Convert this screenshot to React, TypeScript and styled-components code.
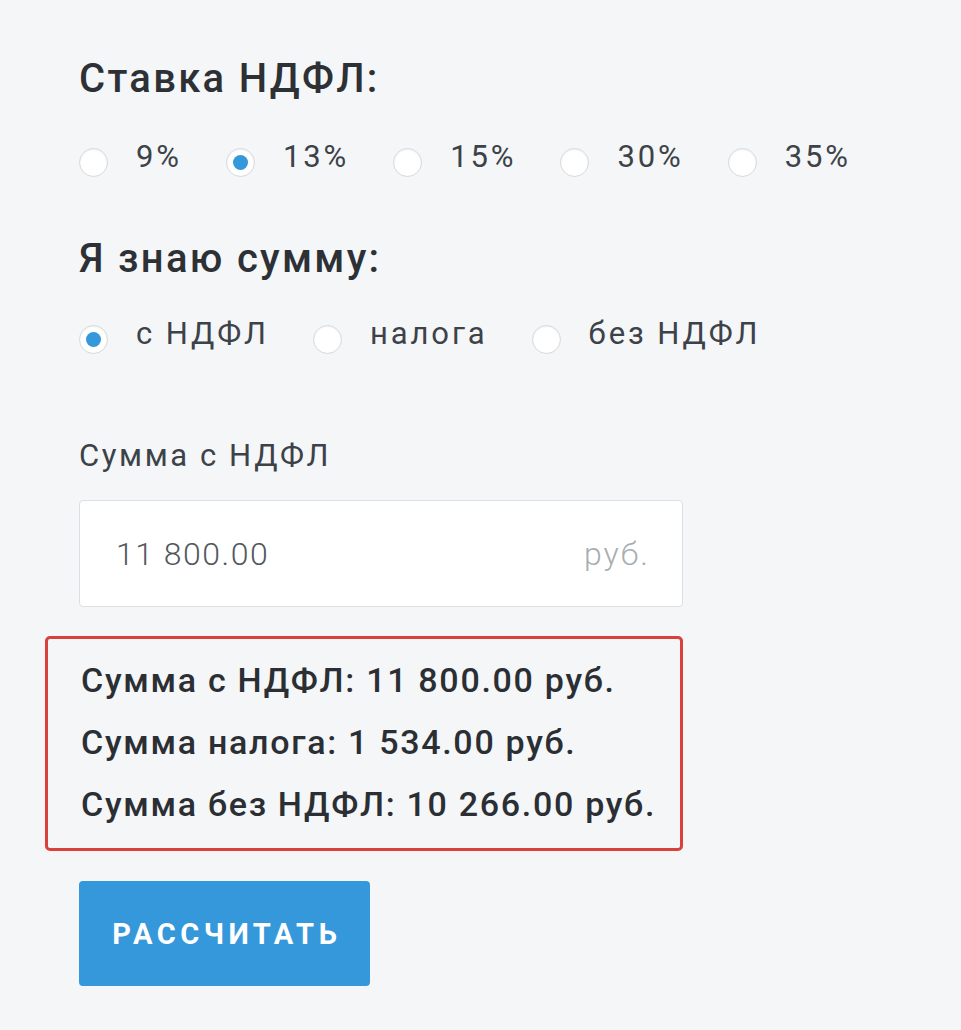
import React, { useState } from "react";
import styled, { createGlobalStyle } from "styled-components";

const Global = createGlobalStyle`
  html, body {
    margin: 0;
    padding: 0;
    background: #f4f6f8;
  }
  body {
    font-family: Roboto, "Noto Sans", Arial, sans-serif;
    color: #333840;
  }
  * { box-sizing: border-box; }
`;

const Page = styled.div`
  min-height: 1030px;
  background: #f4f6f8;
  padding: 55px 0 40px 79px;
`;

const Column = styled.div`
  width: 604px;
  display: flex;
  flex-direction: column;
`;

const Heading = styled.h2<{ $mt?: number }>`
  margin: ${(p) => p.$mt ?? 0}px 0 0 0;
  font-size: 40px;
  line-height: 48px;
  font-weight: 500;
  letter-spacing: 2.3px;
  color: #2d3136;
`;

const RadioRow = styled.div<{ $mt: number }>`
  margin-top: ${(p) => p.$mt}px;
  display: flex;
  align-items: flex-start;
  gap: 44px;
  white-space: nowrap;
`;

const Option = styled.label`
  display: flex;
  align-items: flex-start;
  gap: 28px;
  cursor: pointer;
  font-size: 31px;
  line-height: 34px;
  letter-spacing: 2.9px;
  color: #3d4248;
`;

const Circle = styled.span<{ $on: boolean }>`
  margin-top: 8px;
  width: 29px;
  height: 29px;
  flex: none;
  border-radius: 50%;
  border: 1px solid #d6d9dd;
  background: #fff;
  box-shadow: inset 0 1px 2px rgba(0, 0, 0, 0.06);
  display: flex;
  align-items: center;
  justify-content: center;
  &::after {
    content: "";
    width: 15px;
    height: 15px;
    border-radius: 50%;
    background: #3498db;
    display: ${(p) => (p.$on ? "block" : "none")};
  }
`;

const FieldLabel = styled.div`
  margin-top: 85px;
  font-size: 31px;
  line-height: 34px;
  letter-spacing: 2.6px;
  color: #3d4248;
`;

const InputBox = styled.div`
  margin-top: 27px;
  height: 107px;
  background: #fff;
  border: 1px solid #dcdfe3;
  border-radius: 4px;
  display: flex;
  align-items: center;
  justify-content: space-between;
  padding: 0 32px 0 36px;
`;

const Value = styled.span`
  font-size: 32px;
  font-weight: 300;
  letter-spacing: 1.5px;
  color: #53585e;
`;

const Unit = styled.span`
  font-size: 32px;
  font-weight: 300;
  letter-spacing: 2px;
  color: #a9adb2;
`;

const ResultBox = styled.div`
  margin: 29px 0 0 -34px;
  height: 215px;
  border: 3px solid #d9413d;
  border-radius: 5px;
  padding: 21px 0 0 33px;
  display: flex;
  flex-direction: column;
  gap: 22px;
`;

const ResultLine = styled.div`
  font-size: 34px;
  line-height: 40px;
  font-weight: 500;
  letter-spacing: 1.7px;
  color: #2b2f34;
  white-space: nowrap;
`;

const Button = styled.button`
  margin-top: 30px;
  width: 291px;
  height: 105px;
  padding: 0 0 0 4.5px;
  border: none;
  border-radius: 4px;
  background: #3498db;
  color: #fff;
  font-family: Roboto, Arial, sans-serif;
  font-size: 29px;
  font-weight: 700;
  letter-spacing: 4.5px;
  cursor: pointer;
  align-self: flex-start;
`;

const rates = ["9%", "13%", "15%", "30%", "35%"];
const modes = ["с НДФЛ", "налога", "без НДФЛ"];

export default function App() {
  const [rate, setRate] = useState("13%");
  const [mode, setMode] = useState("с НДФЛ");
  return (
    <>
      <Global />
      <Page>
        <Column>
          <Heading>Ставка НДФЛ:</Heading>
          <RadioRow $mt={37}>
            {rates.map((r) => (
              <Option key={r} onClick={() => setRate(r)}>
                <Circle $on={rate === r} />
                {r}
              </Option>
            ))}
          </RadioRow>
          <Heading $mt={58}>Я знаю сумму:</Heading>
          <RadioRow $mt={34}>
            {modes.map((m) => (
              <Option key={m} onClick={() => setMode(m)}>
                <Circle $on={mode === m} />
                {m}
              </Option>
            ))}
          </RadioRow>
          <FieldLabel>Сумма с НДФЛ</FieldLabel>
          <InputBox>
            <Value>11 800.00</Value>
            <Unit>руб.</Unit>
          </InputBox>
          <ResultBox>
            <ResultLine>Сумма с НДФЛ: 11 800.00 руб.</ResultLine>
            <ResultLine>Сумма налога: 1 534.00 руб.</ResultLine>
            <ResultLine>Сумма без НДФЛ: 10 266.00 руб.</ResultLine>
          </ResultBox>
          <Button>РАССЧИТАТЬ</Button>
        </Column>
      </Page>
    </>
  );
}
